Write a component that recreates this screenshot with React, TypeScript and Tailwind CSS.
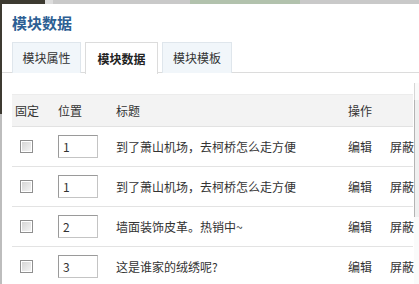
const rows = [
  { pos: '1', title: '到了萧山机场，去柯桥怎么走方便' },
  { pos: '1', title: '到了萧山机场，去柯桥怎么走方便' },
  { pos: '2', title: '墙面装饰皮革。热销中~' },
  { pos: '3', title: '这是谁家的绒绣呢?' },
]

function Checkbox() {
  return (
    <span className="block w-[13px] h-[13px] border border-[#8f8f8f] bg-white p-[1px]">
      <span className="block w-full h-full bg-gradient-to-br from-[#d6d6d6] to-[#f4f4f4]" />
    </span>
  )
}

function PosInput({ value }: { value: string }) {
  return (
    <div className="w-[40px] h-[23px] border border-[#c4c4c4] border-t-[#9a9a9a] border-l-[#9a9a9a] bg-white pl-[4px] leading-[21px] text-[12px] text-[#333]">
      {value}
    </div>
  )
}

export default function App() {
  return (
    <div
      className="w-[419px] h-[284px] overflow-hidden flex flex-col bg-[#c8c8c8]"
      style={{ fontFamily: '"Noto Sans CJK SC", "Liberation Sans", sans-serif' }}
    >
      {/* backdrop strip behind the dialog */}
      <div className="h-[4px] flex shrink-0">
        <div className="w-[45px] bg-[#3d3a31]" />
        <div className="w-[8px] bg-[#dcdcdc]" />
        <div className="w-[137px] bg-[#c9c9c9]" />
        <div className="w-[110px] bg-[#b2c2ad]" />
        <div className="flex-1 bg-[#c9c9c9]" />
      </div>

      <div className="flex flex-1 min-h-0">
        <div className="w-[2px] flex flex-col shrink-0">
          <div className="h-[110px] bg-[#3d3a31]" />
          <div className="flex-1 bg-[#bdbdbd]" />
        </div>

        <div className="flex-1 bg-white flex flex-col text-[12px] text-[#333]">
          <div className="pl-[10px] pt-[5px] mb-[5px] h-[33px] leading-[28px] text-[15px] font-bold text-[#2d5f94]">
            模块数据
          </div>

          <div className="flex h-[31px] pl-[10px] gap-[4px] border-b border-[#dcdcdc]">
            <div className="w-[69px] h-[31px] border border-[#dfe6ec] border-b-0 bg-[#f1f6fa] flex items-center justify-center">
              模块属性
            </div>
            <div className="w-[73px] h-[32px] border border-[#dcdcdc] border-b-0 bg-white flex items-center justify-center font-bold text-[#222]">
              模块数据
            </div>
            <div className="w-[70px] h-[31px] border border-[#dfe6ec] border-b-0 bg-[#f1f6fa] flex items-center justify-center">
              模块模板
            </div>
          </div>

          <div className="flex flex-1 min-h-0 pt-[10px]">
            <div className="flex-1 ml-[10px] pt-[11px]">
              <div className="flex h-[33px] items-center bg-[#f3f3f3] border-t border-[#ececec] border-b border-b-[#e2e2e2]">
                <div className="w-[43px] pl-[3px]">固定</div>
                <div className="w-[58px] pl-[3px]">位置</div>
                <div className="flex-1 pl-[3px]">标题</div>
                <div className="w-[68px] pl-[3px]">操作</div>
              </div>
              {rows.map((r, i) => (
                <div key={i} className="flex h-[40px] items-center border-b border-[#e3e3e3]">
                  <div className="w-[43px] pl-[8px]">
                    <Checkbox />
                  </div>
                  <div className="w-[58px] pl-[3px]">
                    <PosInput value={r.pos} />
                  </div>
                  <div className="flex-1 pl-[3px] whitespace-nowrap">{r.title}</div>
                  <div className="w-[68px] pl-[3px] flex items-center whitespace-nowrap">
                    <span>编辑</span>
                    <span className="mx-[9px] w-px h-[13px] bg-[#dcdcdc]" />
                    <span>屏蔽</span>
                  </div>
                </div>
              ))}
            </div>
            <div className="w-[5px] ml-[1px] flex flex-col">
              <div className="h-[17px] border-l border-[#d6d6d6] bg-[#fafafa]" />
              <div className="h-[117px] border-l border-[#b4b4b4] bg-[#f0f0f0]" />
              <div className="flex-1 bg-[#fafafa]" />
            </div>
          </div>
        </div>
      </div>
    </div>
  )
}
